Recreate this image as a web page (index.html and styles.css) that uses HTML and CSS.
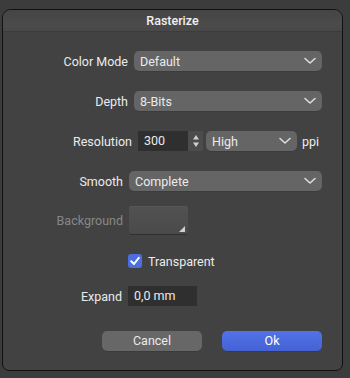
FILE: index.html
```html
<!DOCTYPE html>
<html lang="en">
<head>
    <meta charset="UTF-8">
    <meta name="viewport" content="width=device-width, initial-scale=1.0">
    <title>Rasterize</title>
    <link rel="stylesheet" href="styles.css">
</head>
<body>

<!-- Dialog window -->
<div class="window">
    <div class="titlebar">Rasterize</div>

    <div class="content">
        <div class="row row-color">
            <span class="label">Color Mode</span>
            <div class="popup popup-wide">
                <span>Default</span>
                <svg class="chevron" width="12" height="8" viewBox="0 0 12 8"><path d="M1 1.5 L6 6 L11 1.5" fill="none" stroke="#dcdcdc" stroke-width="1.6" stroke-linecap="round" stroke-linejoin="round"/></svg>
            </div>
        </div>

        <div class="row row-depth">
            <span class="label">Depth</span>
            <div class="popup popup-wide">
                <span>8-Bits</span>
                <svg class="chevron" width="12" height="8" viewBox="0 0 12 8"><path d="M1 1.5 L6 6 L11 1.5" fill="none" stroke="#dcdcdc" stroke-width="1.6" stroke-linecap="round" stroke-linejoin="round"/></svg>
            </div>
        </div>

        <div class="row row-res">
            <span class="label">Resolution</span>
            <div class="field field-res">300</div>
            <div class="stepper">
                <svg width="8" height="16" viewBox="0 0 8 16"><path d="M4 2 L7 6.5 L1 6.5 Z" fill="#d0d0d0"/><path d="M4 14 L7 9.5 L1 9.5 Z" fill="#d0d0d0"/></svg>
            </div>
            <div class="popup popup-high">
                <span>High</span>
                <svg class="chevron" width="12" height="8" viewBox="0 0 12 8"><path d="M1 1.5 L6 6 L11 1.5" fill="none" stroke="#dcdcdc" stroke-width="1.6" stroke-linecap="round" stroke-linejoin="round"/></svg>
            </div>
            <span class="unit">ppi</span>
        </div>

        <div class="row row-smooth">
            <span class="label">Smooth</span>
            <div class="popup popup-smooth">
                <span>Complete</span>
                <svg class="chevron" width="12" height="8" viewBox="0 0 12 8"><path d="M1 1.5 L6 6 L11 1.5" fill="none" stroke="#dcdcdc" stroke-width="1.6" stroke-linecap="round" stroke-linejoin="round"/></svg>
            </div>
        </div>

        <div class="row row-bg">
            <span class="label disabled">Background</span>
            <div class="swatch"></div>
        </div>

        <div class="row row-check">
            <span class="checkbox">
                <svg width="14" height="14" viewBox="0 0 14 14"><path d="M3.2 7.2 L6 10 L10.8 3.8" fill="none" stroke="#fff" stroke-width="2" stroke-linecap="round" stroke-linejoin="round"/></svg>
            </span>
            <span class="check-text">Transparent</span>
        </div>

        <div class="row row-expand">
            <span class="label">Expand</span>
            <div class="field field-expand">0,0 mm</div>
        </div>

        <div class="buttons">
            <div class="button">Cancel</div>
            <div class="button primary">Ok</div>
        </div>
    </div>
</div>

</body>
</html>
```

FILE: styles.css
```css
/* General styles */
body {
    font-family: Roboto, "Liberation Sans", Arial, sans-serif;
    font-size: 12.5px;
    color: #ebebeb;
    background-color: #3c3c3c;
    margin: 0;
    padding: 0;
}

/* Window frame */
.window {
    margin: 9px 0 0 2px;
    width: 339px;
    height: 360px;
    background-color: #424242;
    border: 1px solid #111;
    border-radius: 9px 9px 7px 7px;
    overflow: hidden;
}

.titlebar {
    height: 21px;
    line-height: 21px;
    text-align: center;
    font-weight: 500;
    color: #f0f0f0;
    background: linear-gradient(#454545, #4b4b4b 70%, #484848);
    border-bottom: 1px solid #3c3c3c;
}

.content {
    padding-top: 19px;
}

/* Form rows */
.row {
    display: flex;
    align-items: center;
    height: 20px;
}

.label {
    text-align: right;
    padding-right: 6px;
    flex-shrink: 0;
}

.label.disabled {
    color: #878787;
}

.row-color .label { width: 125px; }
.row-depth { margin-top: 20px; }
.row-depth .label { width: 125px; }
.row-res { margin-top: 20px; }
.row-res .label { width: 129px; }
.row-smooth { margin-top: 20px; }
.row-smooth .label { width: 120px; }
.row-bg { margin-top: 15px; height: 29px; }
.row-bg .label { width: 120px; }
.row-check { margin-top: 19px; height: 14px; padding-left: 125px; }
.row-expand { margin-top: 18px; }
.row-expand .label { width: 119px; }

/* Popup buttons */
.popup {
    display: flex;
    align-items: center;
    justify-content: space-between;
    height: 20px;
    padding: 0 6px 0 6px;
    box-sizing: border-box;
    background-color: #656565;
    border-radius: 5px;
    box-shadow: 0 0.5px 0 #363636;
}

.popup-wide { width: 188px; }
.popup-smooth { width: 193px; }
.popup-high { width: 91px; margin-left: 3px; }

/* Text fields */
.field {
    height: 20px;
    line-height: 20px;
    padding-left: 6px;
    box-sizing: border-box;
    background-color: #2f2f2f;
}

.field-res { width: 50px; }
.field-expand { width: 69px; }

.stepper {
    display: flex;
    align-items: center;
    justify-content: center;
    width: 15px;
    height: 20px;
    background-color: #4c4c4c;
}

.unit {
    margin-left: 5px;
}

/* Colour swatch */
.swatch {
    position: relative;
    width: 59px;
    height: 29px;
    box-sizing: border-box;
    background: linear-gradient(#525252, #4a4a4a);
    border-radius: 3px;
    border-bottom: 1px solid #2e2e2e;
    box-shadow: inset 0 1px 0 #585858;
}

.swatch::after {
    content: "";
    position: absolute;
    right: 3px;
    bottom: 2px;
    width: 0;
    height: 0;
    border-left: 6px solid transparent;
    border-bottom: 6px solid #d0d0d0;
}

/* Checkbox */
.checkbox {
    display: flex;
    width: 14px;
    height: 14px;
    border-radius: 3px;
    background-color: #4d6ee0;
}

.check-text {
    margin-left: 6px;
}

/* Buttons */
.buttons {
    display: flex;
    gap: 20px;
    margin-top: 25px;
    padding-left: 99px;
}

.button {
    width: 100px;
    height: 20px;
    line-height: 20px;
    text-align: center;
    border-radius: 5px;
    background-color: #676767;
    box-shadow: 0 0.5px 0 #353535;
}

.button.primary {
    background: linear-gradient(#5172e8, #4562d4);
    color: #fff;
}
```
